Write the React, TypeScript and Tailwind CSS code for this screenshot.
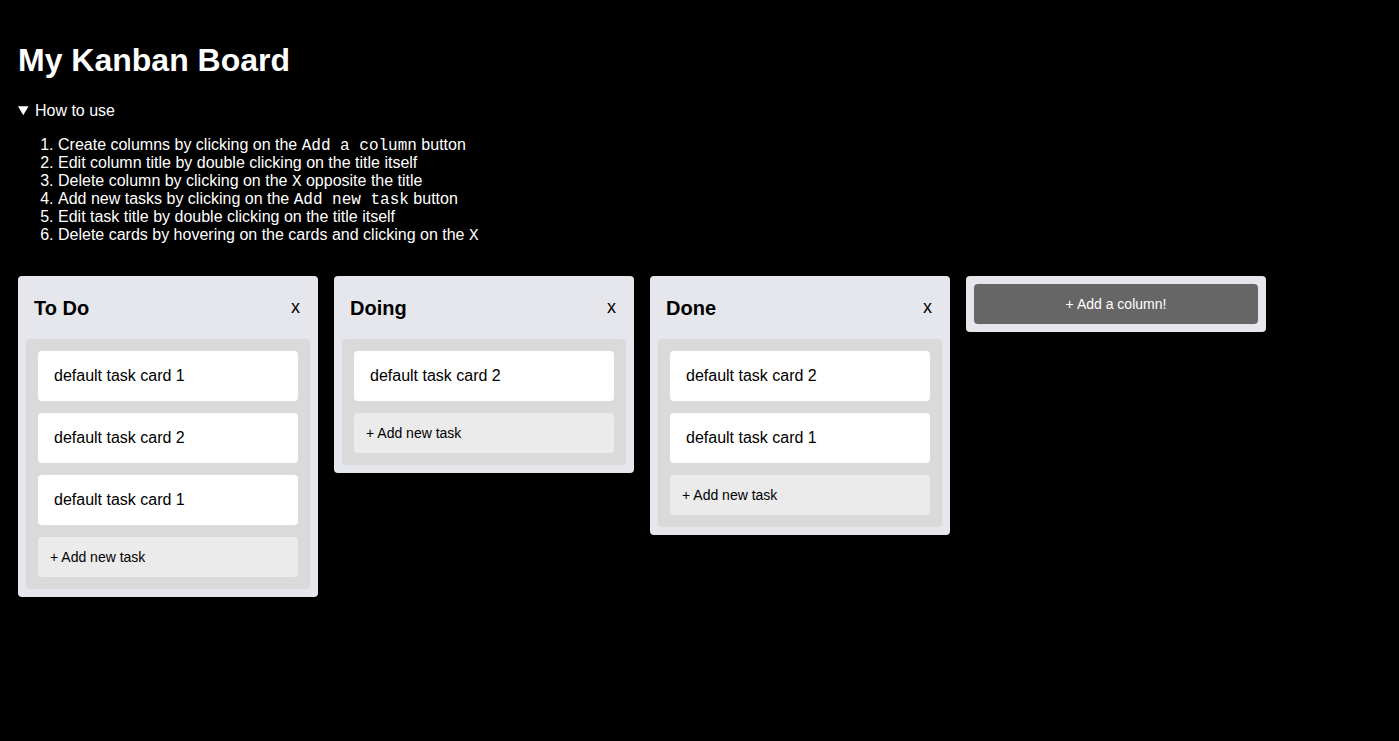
const columns = [
  { title: "To Do", cards: ["default task card 1", "default task card 2", "default task card 1"] },
  { title: "Doing", cards: ["default task card 2"] },
  { title: "Done", cards: ["default task card 2", "default task card 1"] },
];

const mono = "font-['Liberation_Mono',monospace] leading-none";

const steps = [
  <>Create columns by clicking on the <code className={mono}>Add a column</code> button</>,
  <>Edit column title by double clicking on the title itself</>,
  <>Delete column by clicking on the <code className={mono}>X</code> opposite the title</>,
  <>Add new tasks by clicking on the <code className={mono}>Add new task</code> button</>,
  <>Edit task title by double clicking on the title itself</>,
  <>Delete cards by hovering on the cards and clicking on the <code className={mono}>X</code></>,
];

const Column = ({ title, cards }: { title: string; cards: string[] }) => {
  return (
    <div className="w-[300px] shrink-0 rounded bg-[#e6e7ec] px-2 pb-2 text-black">
      <div className="flex h-[63px] items-center justify-between pl-2 pr-[10px]">
        <h2 className="text-[20px] font-bold">{title}</h2>
        <button className="text-[18px]">x</button>
      </div>
      <div className="flex flex-col gap-3 rounded bg-[#dadada] p-3">
        {cards.map((c, i) => (
          <div key={i} className="flex h-[50px] items-center rounded bg-white px-4 text-base">
            {c}
          </div>
        ))}
        <button className="flex h-10 items-center rounded bg-[#ebebeb] px-3 text-left text-sm">
          + Add new task
        </button>
      </div>
    </div>
  );
};

const App = () => {
  return (
    <div className="min-h-screen bg-black px-[18px] pt-[42px] font-['Liberation_Sans',Arial,sans-serif] text-white">
      <h1 className="text-[32px] font-bold leading-[37px]">My Kanban Board</h1>

      <details open className="mt-[23px]">
        <summary className="cursor-pointer text-base leading-[18px]">How to use</summary>
        <ol className="mt-4 list-decimal pl-10 text-base leading-[18px]">
          {steps.map((s, i) => (
            <li key={i} className="h-[18px]">{s}</li>
          ))}
        </ol>
      </details>

      <div className="mt-[32px] flex items-start gap-4">
        {columns.map((col) => (
          <Column key={col.title} title={col.title} cards={col.cards} />
        ))}
        <div className="w-[300px] shrink-0 rounded bg-[#e6e7ec] p-2">
          <button className="h-10 w-full rounded bg-[#666666] text-sm text-white">+ Add a column!</button>
        </div>
      </div>
    </div>
  );
};

export default App;
